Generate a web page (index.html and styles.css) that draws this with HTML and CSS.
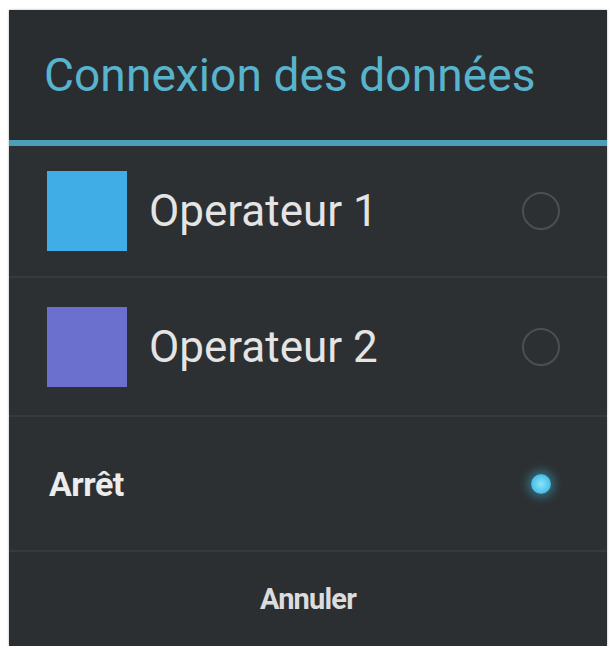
FILE: index.html
```html
<!DOCTYPE html>
<html lang="fr">
<head>
<meta charset="utf-8">
<title>Connexion des données</title>
<link rel="stylesheet" href="styles.css">
</head>
<body>
<div class="dialog">
  <div class="title">Connexion des données</div>
  <div class="title-line"></div>
  <div class="row op op1">
    <div class="swatch swatch-blue"></div>
    <div class="label">Operateur 1</div>
    <div class="radio"></div>
  </div>
  <div class="row op op2">
    <div class="swatch swatch-purple"></div>
    <div class="label">Operateur 2</div>
    <div class="radio"></div>
  </div>
  <div class="row off">
    <div class="label-small">Arrêt</div>
    <div class="radio-on"><div class="dot"></div></div>
  </div>
  <div class="button">Annuler</div>
</div>
</body>
</html>
```

FILE: styles.css
```css
html, body {
  margin: 0;
  padding: 0;
  background: #ffffff;
}
body {
  font-family: Roboto, "Liberation Sans", Arial, sans-serif;
  padding: 10px 0 0 9px;
}
.dialog {
  width: 598px;
  height: 636px;
  background: #2b2f32;
  box-shadow: 0 0 2px rgba(0,0,0,0.35);
  display: flex;
  flex-direction: column;
}
.title {
  height: 130px;
  display: flex;
  align-items: center;
  padding-left: 35px;
  font-size: 46px;
  color: #58b4cd;
  background: #2a2d30;
  letter-spacing: 0.1px;
}
.title-line {
  height: 6px;
  background: #4a9fb7;
}
.row {
  display: flex;
  align-items: center;
  border-bottom: 2px solid #363a3e;
  background: #2c3033;
}
.op1 { height: 130px; }
.op2 { height: 137px; }
.off { height: 133px; }
.op {
  padding: 0 47px 0 38px;
}
.off {
  padding: 0 47px 0 40px;
}
.swatch {
  width: 80px;
  height: 80px;
  margin-right: 22px;
  flex: none;
}
.swatch-blue { background: #41ade6; }
.swatch-purple { background: #6b70cf; }
.label {
  flex: 1;
  font-size: 44px;
  color: #e4e4e4;
  letter-spacing: 0;
}
.label-small {
  flex: 1;
  font-size: 34px;
  font-weight: 700;
  color: #ececec;
  letter-spacing: -0.5px;
}
.radio {
  width: 34px;
  height: 34px;
  border: 2px solid #4b4f53;
  border-radius: 50%;
  flex: none;
}
.radio-on {
  width: 38px;
  height: 38px;
  display: flex;
  align-items: center;
  justify-content: center;
  flex: none;
}
.dot {
  width: 20px;
  height: 20px;
  border-radius: 50%;
  background: radial-gradient(circle, #8ee2fa 0%, #52c6ec 55%, #2f9fc4 100%);
  box-shadow: 0 0 8px 4px rgba(60, 170, 200, 0.45);
}
.button {
  flex: 1;
  display: flex;
  align-items: center;
  justify-content: center;
  font-size: 29px;
  font-weight: 700;
  color: #dcdcdc;
  letter-spacing: -0.8px;
  background: #2b2f32;
}
```
